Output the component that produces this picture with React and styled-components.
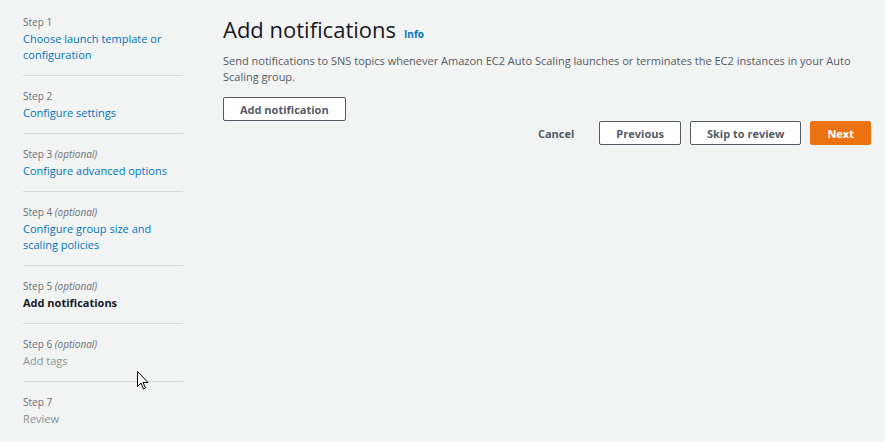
import styled, { createGlobalStyle } from 'styled-components';

const GlobalStyle = createGlobalStyle`
    html, body {
        margin: 0;
        padding: 0;
        background: #f2f3f3;
    }
    body {
        font-family: "Open Sans", "Noto Sans", sans-serif;
        color: #16191f;
    }
    * {
        box-sizing: border-box;
    }
`;

const steps = [
    { step: 'Step 1', title: 'Choose launch template or configuration', state: 'done' },
    { step: 'Step 2', title: 'Configure settings', state: 'done' },
    { step: 'Step 3', optional: true, title: 'Configure advanced options', state: 'done' },
    { step: 'Step 4', optional: true, title: 'Configure group size and scaling policies', state: 'done' },
    { step: 'Step 5', optional: true, title: 'Add notifications', state: 'current' },
    { step: 'Step 6', optional: true, title: 'Add tags', state: 'todo' },
    { step: 'Step 7', title: 'Review', state: 'todo' },
];

function App() {
    return (
        <>
            <GlobalStyle />
            <Page>
                <Sidebar>
                    {steps.map((s) => (
                        <StepItem key={s.step}>
                            <StepLabel>
                                {s.step}
                                {s.optional && <Optional> (optional)</Optional>}
                            </StepLabel>
                            <StepTitle $state={s.state}>{s.title}</StepTitle>
                        </StepItem>
                    ))}
                </Sidebar>
                <Main>
                    <HeadingRow>
                        <Heading>Add notifications</Heading>
                        <InfoLink>Info</InfoLink>
                    </HeadingRow>
                    <Description>
                        Send notifications to SNS topics whenever Amazon EC2 Auto Scaling launches or terminates the EC2 instances in your Auto Scaling group.
                    </Description>
                    <Button>Add notification</Button>
                    <Actions>
                        <LinkButton>Cancel</LinkButton>
                        <Button>Previous</Button>
                        <Button>Skip to review</Button>
                        <Button $primary>Next</Button>
                    </Actions>
                </Main>
                <Cursor viewBox="0 0 12 19" width="12" height="19">
                    <path d="M0.5 0.5 L0.5 15.5 L4 12 L6.5 18 L8.5 17 L6 11.5 L11 11.5 Z" fill="#fff" stroke="#000" strokeWidth="1" strokeLinejoin="round" />
                </Cursor>
            </Page>
        </>
    );
}

const Page = styled.div`
    position: relative;
    display: flex;
    width: 885px;
    height: 442px;
    overflow: hidden;
`;

const Sidebar = styled.nav`
    width: 160px;
    margin-left: 23px;
    padding-top: 2px;
    flex-shrink: 0;
`;

const StepItem = styled.div`
    padding: 12px 0;
    border-bottom: 1px solid #d5dbdb;

    &:last-child {
        border-bottom: none;
    }
`;

const StepLabel = styled.div`
    font-size: 10px;
    line-height: 16px;
    color: #687078;
    margin-bottom: 1px;
`;

const Optional = styled.i`
    font-style: italic;
`;

const StepTitle = styled.div`
    font-size: 11px;
    line-height: 16px;
    color: ${(p) => (p.$state === 'done' ? '#0073bb' : p.$state === 'current' ? '#16191f' : '#879596')};
    font-weight: ${(p) => (p.$state === 'current' ? 700 : 400)};
`;

const Main = styled.main`
    width: 648px;
    margin-left: 40px;
    padding-top: 14px;
    display: flex;
    flex-direction: column;
    align-items: flex-start;
`;

const HeadingRow = styled.div`
    display: flex;
    align-items: baseline;
    gap: 8px;
`;

const Heading = styled.h1`
    margin: 0;
    font-size: 22px;
    line-height: 30px;
    font-weight: 400;
    color: #16191f;
`;

const InfoLink = styled.a`
    font-size: 10px;
    font-weight: 700;
    color: #0073bb;
    cursor: pointer;
`;

const Description = styled.p`
    margin: 9px 0 12px;
    font-size: 11px;
    line-height: 16px;
    color: #545b64;
`;

const Button = styled.button`
    height: 24px;
    padding: 0 16px;
    font-family: inherit;
    font-size: 11px;
    font-weight: 700;
    border-radius: 2px;
    border: 1px solid ${(p) => (p.$primary ? '#ec7211' : '#545b64')};
    background: ${(p) => (p.$primary ? '#ec7211' : '#ffffff')};
    color: ${(p) => (p.$primary ? '#ffffff' : '#545b64')};
    cursor: pointer;
`;

const Actions = styled.div`
    align-self: stretch;
    display: flex;
    justify-content: flex-end;
    align-items: center;
    gap: 9px;
`;

const LinkButton = styled.button`
    font-family: inherit;
    font-size: 11px;
    font-weight: 700;
    color: #545b64;
    background: none;
    border: none;
    padding: 0 16px 0 12px;
    height: 24px;
    cursor: pointer;
`;

const Cursor = styled.svg`
    position: absolute;
    left: 137px;
    top: 371px;
`;

export default App;
